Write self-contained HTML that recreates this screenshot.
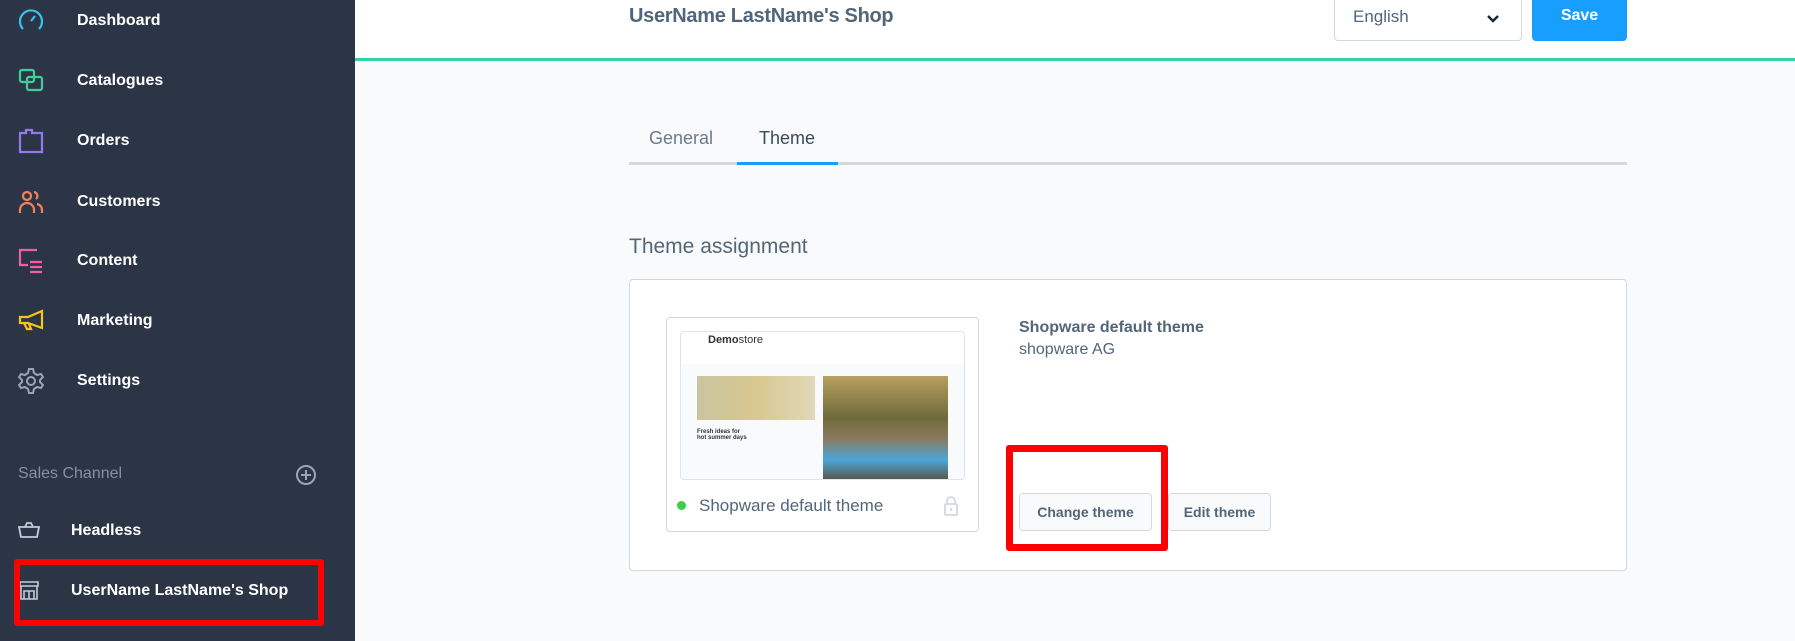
<!DOCTYPE html>
<html><head><meta charset="utf-8"><style>
*{margin:0;padding:0;box-sizing:border-box}
body{width:1795px;height:641px;overflow:hidden;background:#f9fafb;font-family:"Liberation Sans",sans-serif;position:relative}
.sb{position:absolute;left:0;top:0;width:355px;height:641px;background:#2b3546}
.it{position:absolute;left:77px;color:#fff;font-weight:bold;font-size:16px;transform:translateY(-50%)}
.ic{position:absolute;left:18px;width:26px;height:26px;transform:translateY(-50%)}
.hdr{position:absolute;left:355px;top:0;right:0;height:61px;background:#fff;border-bottom:3px solid #2fd3a8}
.a{position:absolute}
</style></head><body>
<div class="sb">
<svg class="ic" style="top:21px" viewBox="0 0 26 26" fill="none" stroke="#36c3f0" stroke-width="2.2"><path d="M5 21A11 11 0 1 1 21 21"/><path d="M13 13l4-5"/></svg>
<div class="it" style="top:21px">Dashboard</div>
<svg class="ic" style="top:81px" viewBox="0 0 26 26" fill="none" stroke="#3dcf94" stroke-width="2.2"><rect x="2" y="2" width="14" height="12" rx="2"/><rect x="9" y="9" width="15" height="13" rx="2"/></svg>
<div class="it" style="top:81px">Catalogues</div>
<svg class="ic" style="top:141px" viewBox="0 0 26 26" fill="none" stroke="#9478f0" stroke-width="2.2"><path d="M2 5h6V2h6v3h10v19H2z"/></svg>
<div class="it" style="top:141px">Orders</div>
<svg class="ic" style="top:202px" viewBox="0 0 26 26" fill="none" stroke="#f2825c" stroke-width="2.2"><circle cx="9" cy="7" r="4"/><path d="M2 24v-3a6 6 0 0 1 14 0v3"/><path d="M16 3a4 4 0 0 1 2 7M19 15a6 6 0 0 1 5 6v3"/></svg>
<div class="it" style="top:202px">Customers</div>
<svg class="ic" style="top:261px" viewBox="0 0 26 26" fill="none" stroke="#f05fa5" stroke-width="2.2"><path d="M19 2H2v15h8M12 14h12M12 19h12M12 24h12"/></svg>
<div class="it" style="top:261px">Content</div>
<svg class="ic" style="top:321px" viewBox="0 0 26 26" fill="none" stroke="#f5c518" stroke-width="2.2"><path d="M2 9h8l14-6v17l-14-5H2zM6 15l3 6h4l-2-5"/></svg>
<div class="it" style="top:321px">Marketing</div>
<svg class="ic" style="top:381px" viewBox="0 0 26 26" fill="none" stroke="#9aa5b6" stroke-width="2"><circle cx="13" cy="13" r="4"/><path d="M11 1h4l1 4 3 2 4-1 2 3-3 3v2l3 3-2 3-4-1-3 2-1 4h-4l-1-4-3-2-4 1-2-3 3-3v-2l-3-3 2-3 4 1 3-2z"/></svg>
<div class="it" style="top:381px">Settings</div>
<div class="a" style="left:18px;top:465px;color:#8591a3;font-size:16px">Sales Channel</div>
<svg class="a" style="left:295px;top:464px" width="22" height="22" viewBox="0 0 22 22" fill="none" stroke="#9aa5b6" stroke-width="2"><circle cx="11" cy="11" r="9"/><path d="M11 6v10M6 11h10"/></svg>
<svg class="a" style="left:18px;top:522px" width="22" height="16" viewBox="0 0 22 16" fill="none" stroke="#c5ccd6" stroke-width="1.8"><path d="M1 5h20l-2 10H3z M7 5l2-4h4l2 4"/></svg>
<div class="it" style="top:531px;left:71px">Headless</div>
<svg class="a" style="left:19px;top:580px" width="20" height="20" viewBox="0 0 20 20" fill="none" stroke="#c5ccd6" stroke-width="1.6"><path d="M1 2h18v4H1zM2 6v13h16V6M5 19v-8h10v8M10 11v8"/></svg>
<div class="it" style="top:591px;left:71px">UserName LastName's Shop</div>
<div class="a" style="left:14px;top:559px;width:310px;height:67px;border:6px solid #f00;border-radius:3px"></div>
</div>
<div class="hdr"></div>
<div class="a" style="left:629px;top:5px;font-size:20px;color:#52667a;font-weight:bold;letter-spacing:-0.3px">UserName LastName's Shop</div>
<div class="a" style="left:1334px;top:-4px;width:188px;height:45px;background:#fff;border:1px solid #d1d9e0;border-radius:4px"></div>
<div class="a" style="left:1353px;top:7px;font-size:17px;color:#52667a">English</div>
<svg class="a" style="left:1486px;top:14px" width="14" height="10" viewBox="0 0 14 10" fill="none" stroke="#1a2533" stroke-width="2.4"><path d="M2 2l5 5 5-5"/></svg>
<div class="a" style="left:1532px;top:-4px;width:95px;height:45px;background:#189eff;border-radius:4px;color:#fff;font-weight:bold;font-size:16px;text-align:center;line-height:40px">Save</div>
<div class="a" style="left:649px;top:128px;font-size:18px;color:#6b7a8c">General</div>
<div class="a" style="left:759px;top:128px;font-size:18px;color:#3d4a5a">Theme</div>
<div class="a" style="left:629px;top:162px;width:998px;height:3px;background:#d1d9e0"></div>
<div class="a" style="left:737px;top:162px;width:101px;height:3px;background:#189eff"></div>
<div class="a" style="left:629px;top:235px;font-size:21px;color:#52667a">Theme assignment</div>
<div class="a" style="left:629px;top:279px;width:998px;height:292px;background:#fff;border:1px solid #d1d9e0;border-radius:4px"></div>
<div class="a" style="left:666px;top:317px;width:313px;height:215px;border:1px solid #d1d9e0;border-radius:4px;background:#fff"></div>
<div class="a" style="left:680px;top:331px;width:285px;height:149px;border:1px solid #dde3ea;border-radius:4px;background:#f9fafb;overflow:hidden">
 <div style="height:32px;background:#fff"></div>
 <div class="a" style="left:27px;top:2px;font-size:11px;color:#333"><b>Demo</b>store</div>
 <div class="a" style="left:16px;top:44px;width:118px;height:44px;background:linear-gradient(90deg,#c9c4a0,#d8c890 50%,#e0d8b8)"></div>
 <div class="a" style="left:142px;top:44px;width:125px;height:105px;background:linear-gradient(180deg,#b8a060,#6e6a3a 40%,#8a7a60 60%,#4aa6d8 80%,#5a5040)"></div>
 <div class="a" style="left:16px;top:97px;font-size:6px;color:#333;font-weight:bold">Fresh ideas for<br>hot summer days</div>
</div>
<div class="a" style="left:677px;top:501px;width:9px;height:9px;border-radius:50%;background:#37d046"></div>
<div class="a" style="left:699px;top:496px;font-size:17px;color:#52667a">Shopware default theme</div>
<svg class="a" style="left:944px;top:496px" width="14" height="20" viewBox="0 0 14 20" fill="none" stroke="#d1d9e0" stroke-width="1.8"><rect x="1" y="8" width="12" height="11" rx="1"/><path d="M3 8V5a4 4 0 0 1 8 0v3M7 12v3"/></svg>
<div class="a" style="left:1019px;top:319px;font-size:16px;font-weight:bold;color:#52667a">Shopware default theme</div>
<div class="a" style="left:1019px;top:341px;font-size:16px;color:#52667a">shopware AG</div>
<div class="a" style="left:1019px;top:493px;width:133px;height:38px;border:1px solid #d1d9e0;border-radius:4px;background:#f9fafb;font-size:14px;font-weight:bold;color:#52667a;text-align:center;line-height:36px">Change theme</div>
<div class="a" style="left:1168px;top:493px;width:103px;height:38px;border:1px solid #d1d9e0;border-radius:4px;background:#f9fafb;font-size:14px;font-weight:bold;color:#52667a;text-align:center;line-height:36px">Edit theme</div>
<div class="a" style="left:1006px;top:445px;width:162px;height:106px;border:7px solid #f00;border-radius:3px"></div>
</body></html>
